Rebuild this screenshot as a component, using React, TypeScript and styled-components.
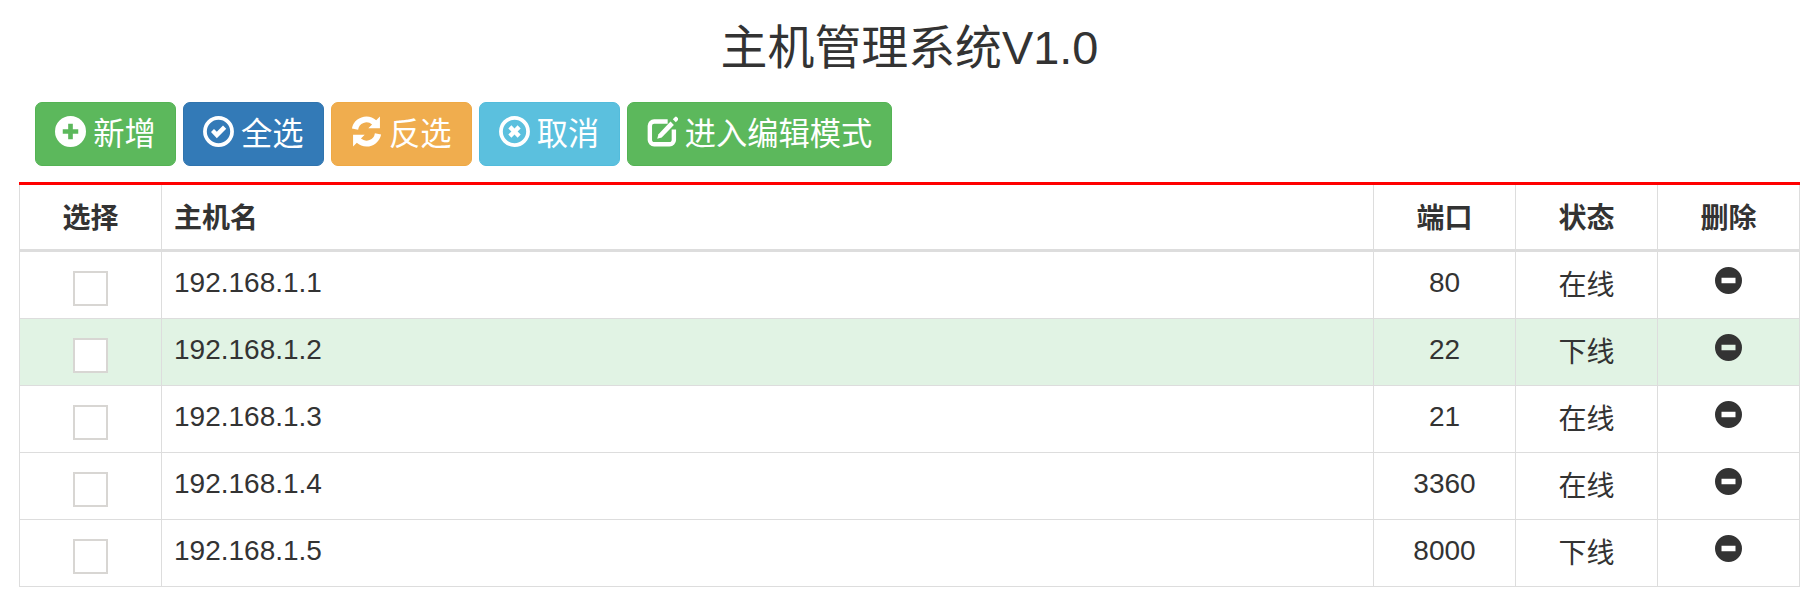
import React from 'react';
import styled, { createGlobalStyle } from 'styled-components';

const GlobalStyle = createGlobalStyle`
  body {
    margin: 0;
    background: #fff;
    color: #333;
    font-family: "Liberation Sans", "Noto Sans CJK SC", sans-serif;
    font-size: 28px;
  }
`;

const Page = styled.div`
  padding: 0 19px;
`;

const Title = styled.h3`
  margin: 0;
  padding-top: 21px;
  height: 102px;
  box-sizing: border-box;
  font-size: 46.9px;
  font-weight: 400;
  line-height: 54px;
  text-align: center;
  color: #333;
`;

const Toolbar = styled.div`
  display: flex;
  gap: 7px;
  padding-left: 16px;
  height: 80px;
`;

const Button = styled.button<{ $bg: string; $edge: string }>`
  display: flex;
  align-items: center;
  height: 64px;
  padding: 2px 19.2px 0;
  box-sizing: border-box;
  border: 1px solid ${(p) => p.$edge};
  border-radius: 7px;
  background: ${(p) => p.$bg};
  color: #fff;
  font-family: inherit;
  font-size: 31.25px;
  line-height: 44px;
`;

const IconBox = styled.svg`
  width: 31px;
  height: 31px;
  margin-right: 7px;
  position: relative;
  top: -4px;
  flex: none;
`;

const Table = styled.table`
  width: 1781px;
  table-layout: fixed;
  border-collapse: separate;
  border-spacing: 0;
  border-top: 3px solid #f00;
`;

const Head = styled.th<{ $left?: boolean }>`
  height: 67px;
  padding: 0 12px 3px;
  box-sizing: border-box;
  border-right: 1px solid #ddd;
  border-bottom: 3px solid #ddd;
  font-size: 28px;
  font-weight: 700;
  text-align: ${(p) => (p.$left ? 'left' : 'center')};
  &:first-child {
    border-left: 1px solid #ddd;
  }
`;

const Row = styled.tr<{ $active?: boolean }>`
  background: ${(p) => (p.$active ? '#e1f3e4' : '#fff')};
`;

const Cell = styled.td<{ $left?: boolean }>`
  height: 67px;
  padding: 0 12px 5px;
  box-sizing: border-box;
  border-right: 1px solid #ddd;
  border-bottom: 1px solid #ddd;
  font-size: 28px;
  text-align: ${(p) => (p.$left ? 'left' : 'center')};
  &:first-child {
    border-left: 1px solid #ddd;
  }
`;

const CheckCell = styled(Cell)`
  padding: 0;
  font-size: 0;
`;

const Check = styled.input`
  appearance: none;
  display: inline-block;
  width: 35px;
  height: 35px;
  margin: 7px 0 0;
  background: #fff;
  border: 2px solid #d8d6d3;
  box-sizing: border-box;
`;

const DeleteIcon = styled.svg`
  display: block;
  width: 27px;
  height: 27px;
  margin: 0 auto;
  position: relative;
  top: -2px;
`;

const PlusIcon = () => (
  <IconBox viewBox="0 0 24 24">
    <path
      fill="#fff"
      fillRule="evenodd"
      d="M12 0a12 12 0 1 1 0 24a12 12 0 0 1 0-24zM10.200 6v4.200H6v3.600h4.200V18h3.600v-4.200H18v-3.600h-4.200V6z"
    />
  </IconBox>
);

const OkIcon = () => (
  <IconBox viewBox="0 0 24 24">
    <circle cx="12" cy="12" r="10.500" fill="none" stroke="#fff" strokeWidth="2.900" />
    <path fill="#fff" d="M6.200 12.300l2.300-2.300 2.200 2.200 4.800-4.800 2.500 2.500-7.300 7.300z" />
  </IconBox>
);

const RefreshIcon = () => (
  <IconBox viewBox="0 0 24 24">
    <path
      fill="#fff"
      d="M12 0.300c2.900 0 5.500 1.100 7.500 2.900L22.400 0.400v9h-9l2.900-2.900A6.600 6.600 0 0 0 5.500 10.600L0.700 9.700A11.600 11.600 0 0 1 12 0.300z"
    />
    <path
      fill="#fff"
      d="M12 23.700c-2.900 0-5.500-1.100-7.500-2.900L1.600 23.600v-9h9l-2.900 2.900a6.600 6.600 0 0 0 10.800-4.100l4.800 0.900A11.600 11.600 0 0 1 12 23.700z"
    />
  </IconBox>
);

const RemoveIcon = () => (
  <IconBox viewBox="0 0 24 24">
    <circle cx="12" cy="12" r="10.500" fill="none" stroke="#fff" strokeWidth="2.900" />
    <path
      fill="#fff"
      d="M9.600 7.200l2.400 2.400 2.400-2.400 2.400 2.400-2.400 2.400 2.400 2.400-2.400 2.400-2.400-2.400-2.400 2.400-2.400-2.400 2.400-2.400-2.400-2.400z"
    />
  </IconBox>
);

const EditIcon = () => (
  <IconBox viewBox="0 0 24 24">
    <path
      fill="none"
      stroke="#fff"
      strokeWidth="3.400"
      d="M16 4.300H5.500a3.300 3.300 0 0 0-3.300 3.300v11a3.300 3.300 0 0 0 3.300 3.300h12a3.300 3.300 0 0 0 3.300-3.300V10.500"
    />
    <path fill="#fff" d="M18.200 4.300l2.600 2.600-9.400 9.800-3.500 1 1-3.600z" />
    <path fill="#fff" d="M20 2.500l1.700-1.700a1 1 0 0 1 1.400 0l0.900 0.900a1 1 0 0 1 0 1.400l-1.700 1.700z" />
  </IconBox>
);

const MinusIcon = () => (
  <DeleteIcon viewBox="0 0 27 27">
    <path
      fill="#333"
      fillRule="evenodd"
      d="M13.500 0a13.500 13.500 0 1 1 0 27a13.500 13.500 0 0 1 0-27zM6.500 10.800v5.400h14v-5.400z"
    />
  </DeleteIcon>
);

const buttons = [
  { label: '新增', icon: <PlusIcon />, bg: '#5cb85c', edge: '#54b354' },
  { label: '全选', icon: <OkIcon />, bg: '#337ab7', edge: '#3074ae' },
  { label: '反选', icon: <RefreshIcon />, bg: '#f0ad4e', edge: '#efa944' },
  { label: '取消', icon: <RemoveIcon />, bg: '#5bc0de', edge: '#52bcdc' },
  { label: '进入编辑模式', icon: <EditIcon />, bg: '#5cb85c', edge: '#54b354' },
];

const hosts = [
  { name: '192.168.1.1', port: 80, status: '在线' },
  { name: '192.168.1.2', port: 22, status: '下线', active: true },
  { name: '192.168.1.3', port: 21, status: '在线' },
  { name: '192.168.1.4', port: 3360, status: '在线' },
  { name: '192.168.1.5', port: 8000, status: '下线' },
];

const App = () => {
  return (
    <Page>
      <GlobalStyle />
      <Title>主机管理系统V1.0</Title>
      <Toolbar>
        {buttons.map((b) => (
          <Button key={b.label} $bg={b.bg} $edge={b.edge}>
            {b.icon}
            {b.label}
          </Button>
        ))}
      </Toolbar>
      <Table>
        <colgroup>
          <col width="143" />
          <col />
          <col width="142" />
          <col width="142" />
          <col width="142" />
        </colgroup>
        <thead>
          <tr>
            <Head>选择</Head>
            <Head $left>主机名</Head>
            <Head>端口</Head>
            <Head>状态</Head>
            <Head>删除</Head>
          </tr>
        </thead>
        <tbody>
          {hosts.map((h) => (
            <Row key={h.name} $active={h.active}>
              <CheckCell>
                <Check type="checkbox" />
              </CheckCell>
              <Cell $left>{h.name}</Cell>
              <Cell>{h.port}</Cell>
              <Cell>{h.status}</Cell>
              <Cell>
                <MinusIcon />
              </Cell>
            </Row>
          ))}
        </tbody>
      </Table>
    </Page>
  );
};

export default App;
